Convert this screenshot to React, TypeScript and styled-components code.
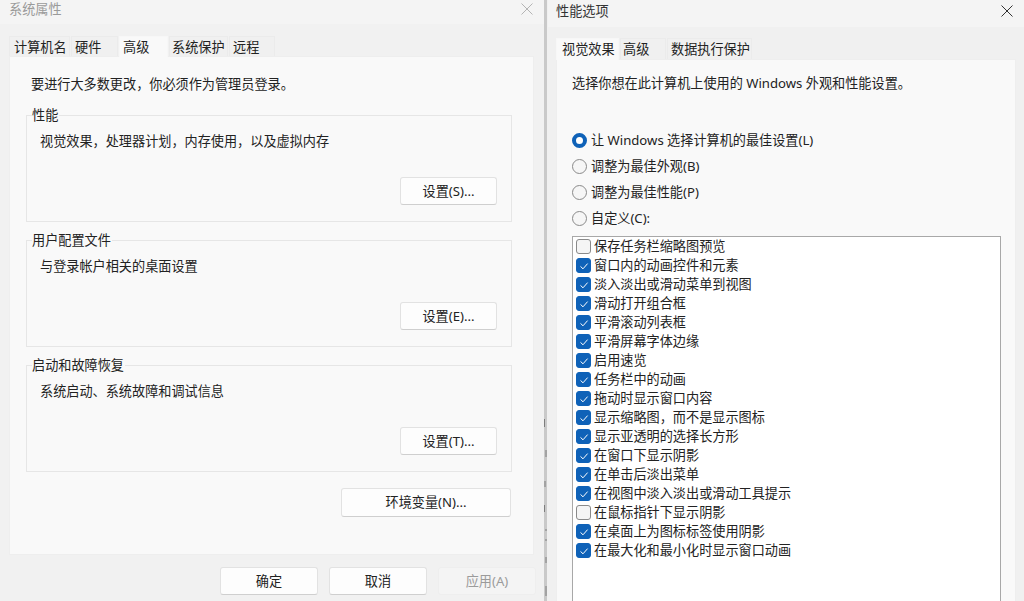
import React from 'react'
import styled, { createGlobalStyle } from 'styled-components';

const GlobalStyle = createGlobalStyle`
  html, body {
    margin: 0;
    padding: 0;
    background: #f1f1f1;
    overflow: hidden;
  }
  * {
    box-sizing: border-box;
  }
  body {
    font-family: "Noto Sans", "Noto Sans CJK SC", sans-serif;
    font-size: 13.15px;
    color: #222;
  }
`;

const visualItems = [
  { label: '保存任务栏缩略图预览', checked: false },
  { label: '窗口内的动画控件和元素', checked: true },
  { label: '淡入淡出或滑动菜单到视图', checked: true },
  { label: '滑动打开组合框', checked: true },
  { label: '平滑滚动列表框', checked: true },
  { label: '平滑屏幕字体边缘', checked: true },
  { label: '启用速览', checked: true },
  { label: '任务栏中的动画', checked: true },
  { label: '拖动时显示窗口内容', checked: true },
  { label: '显示缩略图，而不是显示图标', checked: true },
  { label: '显示亚透明的选择长方形', checked: true },
  { label: '在窗口下显示阴影', checked: true },
  { label: '在单击后淡出菜单', checked: true },
  { label: '在视图中淡入淡出或滑动工具提示', checked: true },
  { label: '在鼠标指针下显示阴影', checked: false },
  { label: '在桌面上为图标标签使用阴影', checked: true },
  { label: '在最大化和最小化时显示窗口动画', checked: true },
];

const groups = [
  { title: '性能', text: '视觉效果，处理器计划，内存使用，以及虚拟内存', action: '设置(S)...' },
  { title: '用户配置文件', text: '与登录帐户相关的桌面设置', action: '设置(E)...' },
  { title: '启动和故障恢复', text: '系统启动、系统故障和调试信息', action: '设置(T)...' },
];

const leftTabs = [
  { label: '计算机名', width: 61, pad: 4 },
  { label: '硬件', width: 47, pad: 3 },
  { label: '高级', width: 49, pad: 3, active: true },
  { label: '系统保护', width: 59, pad: 2 },
  { label: '远程', width: 46, pad: 3 },
];

const rightTabs = [
  { label: '视觉效果', width: 63, pad: 5, active: true },
  { label: '高级', width: 46, pad: 2 },
  { label: '数据执行保护', width: 85, pad: 3 },
];

const CloseIcon = ({ color }: { color: string }) => (
  <svg width="12" height="12" viewBox="0 0 12 12" fill="none">
    <path d="M0.5 0.5L11.5 11.5M11.5 0.5L0.5 11.5" stroke={color} strokeWidth="1" />
  </svg>
);

const CheckIcon = () => (
  <svg width="10" height="10" viewBox="0 0 10 10" fill="none">
    <path d="M1.5 5.4L4 7.8L8.6 2.6" stroke="#fff" strokeWidth="1" />
  </svg>
);

// bits of the window behind showing through the gap
const GapMarks = () => (
  <svg width="3" height="601" viewBox="0 0 3 601" fill="none">
    <path
      d="M0.5 419V427M2 450V457M1 481V487M0.5 505V512M1 530H3M1 540H3M2 557V563M2 586V596"
      stroke="#7d7d7d"
      strokeWidth="1"
    />
  </svg>
);

const App = () => {
  return (
    <>
      <GlobalStyle />
      <Desktop>
        <LeftWindow>
          <TitleBar>
            <WindowTitle $dim>系统属性</WindowTitle>
            <CloseIcon color="#b4b4b4" />
          </TitleBar>
          <LeftTabs>
            {leftTabs.map((tab) => (
              <Tab key={tab.label} $width={tab.width} $pad={tab.pad} $active={tab.active}>{tab.label}</Tab>
            ))}
          </LeftTabs>
          <LeftPanel>
            <Notice $indent={5}>要进行大多数更改，你必须作为管理员登录。</Notice>
            <Groups>
              {groups.map((group) => (
                <Group key={group.title}>
                  <GroupTitle>{group.title}</GroupTitle>
                  <GroupText>{group.text}</GroupText>
                  <GroupAction>
                    <ActionButton>{group.action}</ActionButton>
                  </GroupAction>
                </Group>
              ))}
            </Groups>
            <EnvRow>
              <EnvButton>环境变量(N)...</EnvButton>
            </EnvRow>
          </LeftPanel>
          <Footer>
            <FooterButton>确定</FooterButton>
            <FooterButton>取消</FooterButton>
            <FooterButton $disabled>应用(A)</FooterButton>
          </Footer>
        </LeftWindow>
        <Divider><GapMarks /></Divider>
        <RightWindow>
          <TitleBar $right>
            <WindowTitle>性能选项</WindowTitle>
            <CloseIcon color="#333" />
          </TitleBar>
          <RightTabs>
            {rightTabs.map((tab) => (
              <Tab key={tab.label} $width={tab.width} $pad={tab.pad} $tall $active={tab.active}>{tab.label}</Tab>
            ))}
          </RightTabs>
          <RightPanel>
            <Notice $indent={0}>选择你想在此计算机上使用的 Windows 外观和性能设置。</Notice>
            <RadioList>
              <RadioRow><Radio $selected />让 Windows 选择计算机的最佳设置(L)</RadioRow>
              <RadioRow><Radio />调整为最佳外观(B)</RadioRow>
              <RadioRow><Radio />调整为最佳性能(P)</RadioRow>
              <RadioRow><Radio />自定义(C):</RadioRow>
            </RadioList>
            <CheckList>
              {visualItems.map((item) => (
                <CheckRow key={item.label}>
                  <CheckBox $checked={item.checked}>{item.checked && <CheckIcon />}</CheckBox>
                  {item.label}
                </CheckRow>
              ))}
            </CheckList>
          </RightPanel>
        </RightWindow>
      </Desktop>
    </>
  )
};

const Desktop = styled.div`
  width: 1024px;
  height: 601px;
  display: flex;
  overflow: hidden;
  background: #f1f1f1;
`;

const LeftWindow = styled.div`
  width: 544px;
  height: 601px;
  display: flex;
  flex-direction: column;
  background: #f1f1f1;
`;

const Divider = styled.div`
  width: 3px;
  height: 601px;
  flex-shrink: 0;
  background: #c9c9c9;
`;

const RightWindow = styled.div`
  width: 477px;
  height: 601px;
  display: flex;
  flex-direction: column;
  overflow: hidden;
  background: #f0f0f0;
  padding-left: 1px;
`;

const TitleBar = styled.div<{ $right?: boolean }>`
  height: ${(props) => (props.$right ? '27px' : '24px')};
  flex-shrink: 0;
  display: flex;
  align-items: center;
  justify-content: space-between;
  padding: ${(props) => (props.$right ? '0 11px 6px 8px' : '0 11px 7px 9px')};
  background: #f4f4f4;
`;

const WindowTitle = styled.div<{ $dim?: boolean }>`
  line-height: 18px;
  color: ${(props) => (props.$dim ? '#9a9a9a' : '#333')};
`;

const LeftTabs = styled.div`
  display: flex;
  align-items: flex-end;
  flex-shrink: 0;
  height: 32px;
  padding-left: 9px;
`;

const RightTabs = styled(LeftTabs)`
  padding-left: 8px;
`;

const Tab = styled.div<{ $width: number; $pad: number; $active?: boolean; $tall?: boolean }>`
  position: relative;
  z-index: 1;
  flex-shrink: 0;
  width: ${(props) => props.$width}px;
  height: ${(props) => (props.$tall ? 22 : 21) - (props.$active ? 0 : 1)}px;
  margin-right: 1px;
  margin-bottom: ${(props) => (props.$active ? '-1px' : '0')};
  padding-left: ${(props) => props.$pad}px;
  line-height: 20px;
  white-space: nowrap;
  background: ${(props) => (props.$active ? '#f9f9f9' : '#f0f0f0')};
  border: 1px solid ${(props) => (props.$active ? '#f7f7f7' : '#ebebeb')};
  border-bottom: none;
`;

const LeftPanel = styled.div`
  width: 525px;
  height: 499px;
  flex-shrink: 0;
  margin-left: 9px;
  padding: 18px 22px 0 16px;
  background: #f9f9f9;
  border: 1px solid #eeeeee;
`;

const RightPanel = styled.div`
  width: 460px;
  height: 560px;
  flex-shrink: 0;
  margin-left: 8px;
  padding: 14px 15px 0 15px;
  background: #f9f9f9;
  border: 1px solid #eeeeee;
`;

const Notice = styled.div<{ $indent: number }>`
  line-height: 18px;
  white-space: nowrap;
  margin-left: ${(props) => props.$indent}px;
`;

const Groups = styled.div`
  display: flex;
  flex-direction: column;
  gap: 11px;
  margin-top: 15px;
`;

const Group = styled.fieldset`
  width: 486px;
  height: 114px;
  margin: 0;
  padding: 0 14px 0 13px;
  border: 1px solid #e6e6e6;
  display: block;
`;

const GroupTitle = styled.legend`
  line-height: 15px;
  padding: 0 1px 0 0;
  margin-left: -8px;
`;

const GroupText = styled.div`
  line-height: 18px;
  margin-top: 9px;
`;

const GroupAction = styled.div`
  display: flex;
  justify-content: flex-end;
  margin-top: 27px;
`;

const ActionButton = styled.button`
  width: 97px;
  height: 28px;
  padding: 0 0 2px;
  font-family: inherit;
  font-size: inherit;
  color: #222;
  background: #fdfdfd;
  border: 1px solid #e2e2e2;
  border-bottom-color: #cfcfcf;
  border-radius: 3px;
`;

const EnvRow = styled.div`
  display: flex;
  justify-content: flex-end;
  margin-top: 16px;
`;

const EnvButton = styled(ActionButton)`
  width: 170px;
  height: 29px;
`;

const Footer = styled.div`
  display: flex;
  justify-content: flex-end;
  gap: 11px;
  padding: 12px 8px 0 0;
`;

const FooterButton = styled.button<{ $disabled?: boolean }>`
  width: 98px;
  height: 28px;
  padding: 0 0 2px;
  font-family: inherit;
  font-size: inherit;
  color: ${(props) => (props.$disabled ? '#9b9b9b' : '#222')};
  background: ${(props) => (props.$disabled ? '#f4f4f4' : '#fdfdfd')};
  border: 1px solid ${(props) => (props.$disabled ? '#eeeeee' : '#e2e2e2')};
  border-bottom-color: ${(props) => (props.$disabled ? '#eeeeee' : '#cfcfcf')};
  border-radius: 3px;
`;

const RadioList = styled.div`
  display: flex;
  flex-direction: column;
  gap: 8px;
  margin-top: 39px;
`;

const RadioRow = styled.div`
  display: flex;
  align-items: center;
  gap: 4px;
  height: 18px;
  padding-bottom: 2px;
  white-space: nowrap;
`;

const Radio = styled.span<{ $selected?: boolean }>`
  width: 15px;
  height: 15px;
  margin-top: 2px;
  border-radius: 50%;
  flex-shrink: 0;
  background: ${(props) => (props.$selected ? '#fff' : '#f6f6f6')};
  border: ${(props) => (props.$selected ? '4px solid #0f62b8' : '1px solid #8a8a8a')};
`;

const CheckList = styled.div`
  width: 429px;
  height: 400px;
  margin-top: 9px;
  padding: 0 3px;
  background: #fff;
  border: 1px solid #a8a8a8;
`;

const CheckRow = styled.div`
  display: flex;
  align-items: center;
  gap: 3px;
  height: 19px;
  padding-bottom: 2px;
  white-space: nowrap;
`;

const CheckBox = styled.span<{ $checked: boolean }>`
  width: 15px;
  height: 15px;
  margin-top: 2px;
  border-radius: 3px;
  flex-shrink: 0;
  display: flex;
  align-items: center;
  justify-content: center;
  background: ${(props) => (props.$checked ? '#0f62b8' : '#f5f5f5')};
  border: 1px solid ${(props) => (props.$checked ? '#0f62b8' : '#8a8a8a')};
`;

export default App;
